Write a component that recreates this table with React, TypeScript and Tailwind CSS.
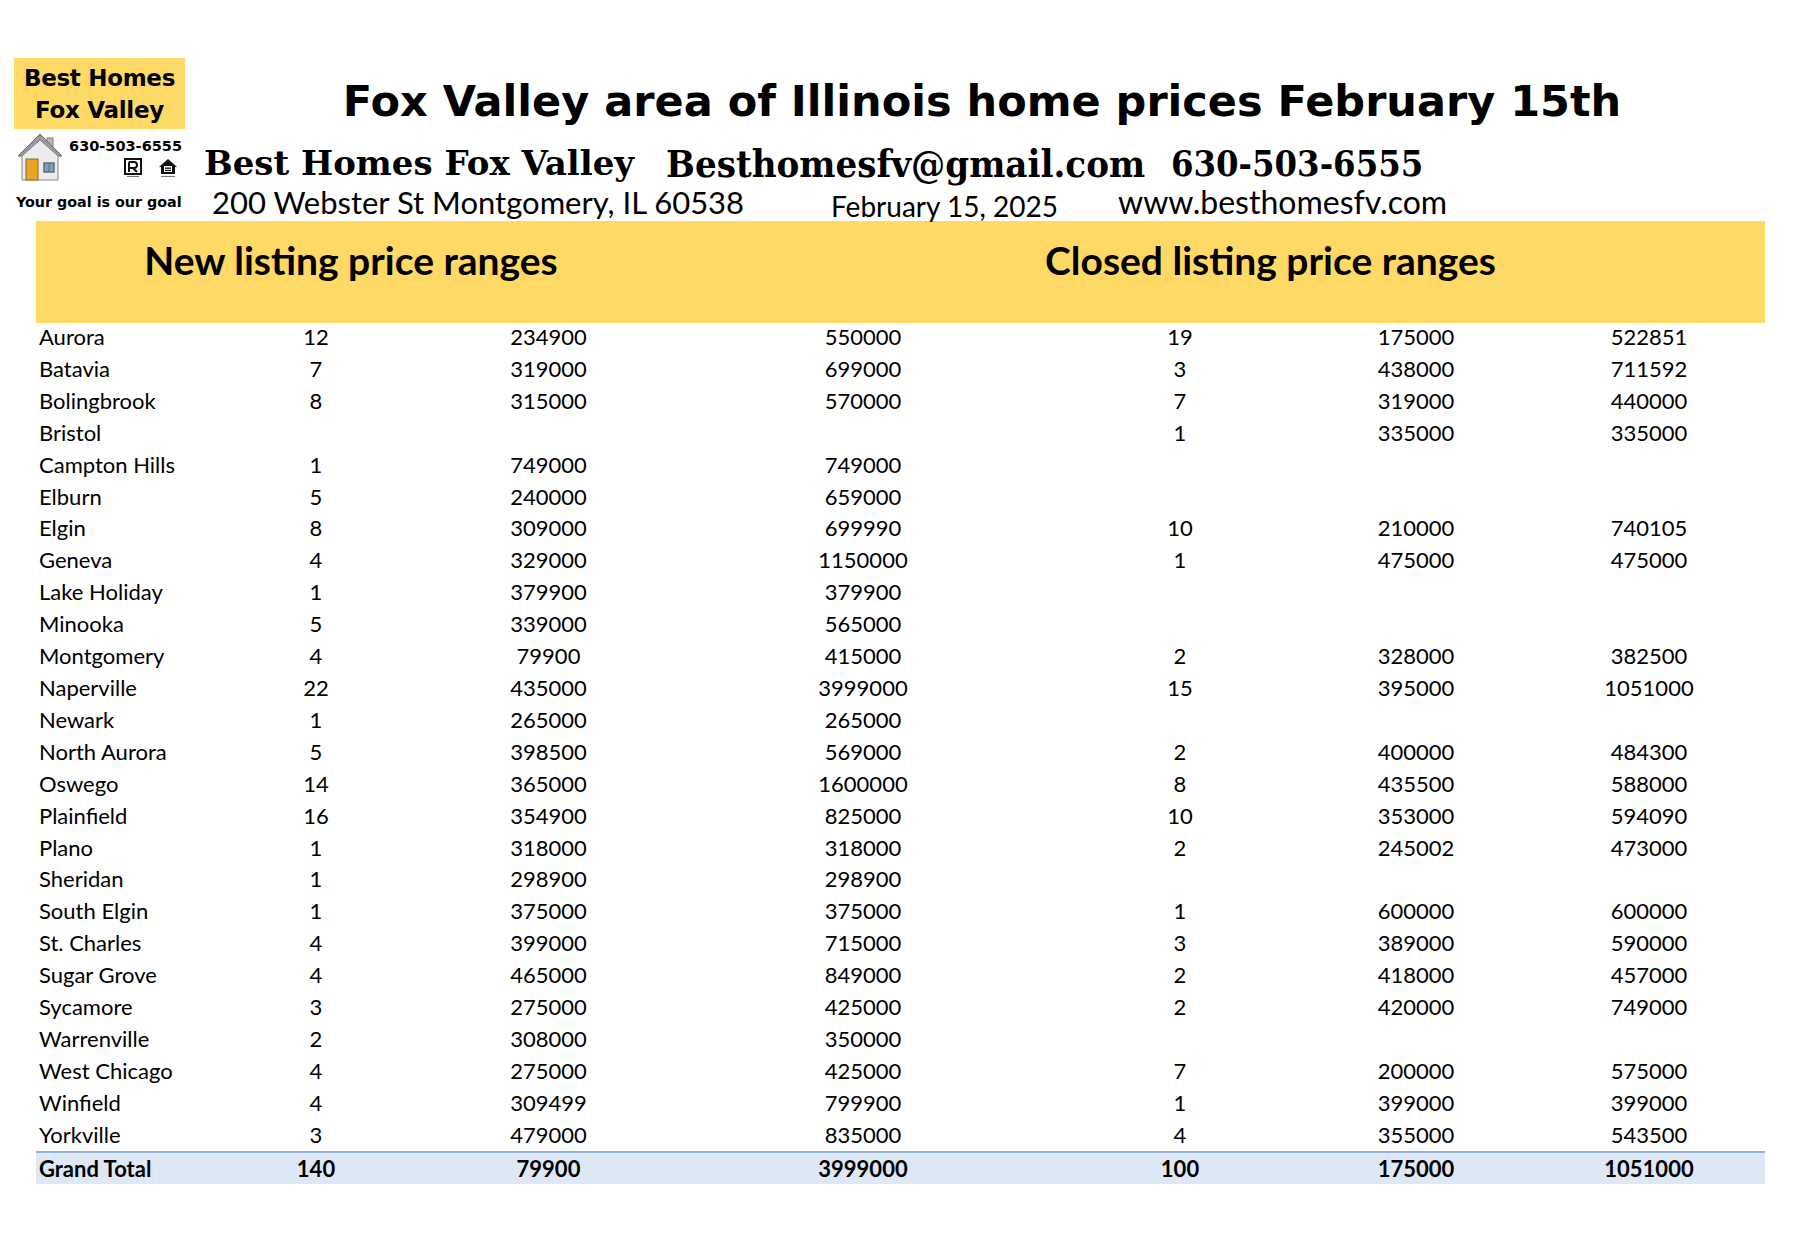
import React from "react";

type Row = [string, string, string, string, string, string, string];

const rows: Row[] = [
  ["Aurora", "12", "234900", "550000", "19", "175000", "522851"],
  ["Batavia", "7", "319000", "699000", "3", "438000", "711592"],
  ["Bolingbrook", "8", "315000", "570000", "7", "319000", "440000"],
  ["Bristol", "", "", "", "1", "335000", "335000"],
  ["Campton Hills", "1", "749000", "749000", "", "", ""],
  ["Elburn", "5", "240000", "659000", "", "", ""],
  ["Elgin", "8", "309000", "699990", "10", "210000", "740105"],
  ["Geneva", "4", "329000", "1150000", "1", "475000", "475000"],
  ["Lake Holiday", "1", "379900", "379900", "", "", ""],
  ["Minooka", "5", "339000", "565000", "", "", ""],
  ["Montgomery", "4", "79900", "415000", "2", "328000", "382500"],
  ["Naperville", "22", "435000", "3999000", "15", "395000", "1051000"],
  ["Newark", "1", "265000", "265000", "", "", ""],
  ["North Aurora", "5", "398500", "569000", "2", "400000", "484300"],
  ["Oswego", "14", "365000", "1600000", "8", "435500", "588000"],
  ["Plainfield", "16", "354900", "825000", "10", "353000", "594090"],
  ["Plano", "1", "318000", "318000", "2", "245002", "473000"],
  ["Sheridan", "1", "298900", "298900", "", "", ""],
  ["South Elgin", "1", "375000", "375000", "1", "600000", "600000"],
  ["St. Charles", "4", "399000", "715000", "3", "389000", "590000"],
  ["Sugar Grove", "4", "465000", "849000", "2", "418000", "457000"],
  ["Sycamore", "3", "275000", "425000", "2", "420000", "749000"],
  ["Warrenville", "2", "308000", "350000", "", "", ""],
  ["West Chicago", "4", "275000", "425000", "7", "200000", "575000"],
  ["Winfield", "4", "309499", "799900", "1", "399000", "399000"],
  ["Yorkville", "3", "479000", "835000", "4", "355000", "543500"],
];

const total: Row = ["Grand Total", "140", "79900", "3999000", "100", "175000", "1051000"];

const cols = "grid grid-cols-[164px_232px_233px_396px_238px_234px_232px]";

function House() {
  return (
    <svg width="48" height="50" viewBox="0 0 48 50">
      <rect x="31" y="6" width="6" height="12" fill="#b9b9b9" stroke="#7a7a7a" strokeWidth="1" />
      <polygon points="24,2 46,24 42,24 24,8 6,24 2,24" fill="#9a9a9a" stroke="#6d6d6d" strokeWidth="1" />
      <polygon points="24,8 42,24 42,48 6,48 6,24" fill="#ececec" stroke="#8a8a8a" strokeWidth="1" />
      <rect x="10" y="27" width="12" height="21" fill="#e8a524" stroke="#8a6a2a" strokeWidth="1" />
      <rect x="28" y="31" width="10" height="9" fill="#7aa0c8" stroke="#6b6b6b" strokeWidth="1.5" />
      <line x1="33" y1="31" x2="33" y2="40" stroke="#6b6b6b" strokeWidth="1" />
    </svg>
  );
}

function Realtor() {
  return (
    <svg width="18" height="20" viewBox="0 0 18 20">
      <rect x="1" y="1" width="16" height="15" fill="none" stroke="#111" strokeWidth="2" />
      <path d="M5 4 V14 M5 4 H10 Q13 4 13 7 Q13 10 10 10 H5 M9 10 L13 14" fill="none" stroke="#111" strokeWidth="2" />
      <rect x="3" y="18" width="12" height="1" fill="#777" />
    </svg>
  );
}

function EqualHousing() {
  return (
    <svg width="20" height="20" viewBox="0 0 20 20">
      <path d="M10 1 L19 9 H17 V16 H3 V9 H1 Z" fill="#111" />
      <rect x="6" y="8" width="8" height="6" fill="#fff" />
      <rect x="7" y="9.5" width="6" height="1.3" fill="#111" />
      <rect x="7" y="11.8" width="6" height="1.3" fill="#111" />
      <rect x="3" y="18" width="14" height="1" fill="#777" />
    </svg>
  );
}

function DataRow({ r, bold }: { r: Row; bold?: boolean }) {
  return (
    <div className={`${cols} items-center ${bold ? "font-bold" : ""}`}>
      <div className="pl-[3px] whitespace-nowrap">{r[0]}</div>
      {r.slice(1).map((v, i) => (
        <div key={i} className="text-center">
          {v}
        </div>
      ))}
    </div>
  );
}

export default function App() {
  return (
    <div className="w-[1800px] h-[1260px] bg-white text-black overflow-hidden font-['Lato','Liberation_Sans',sans-serif]">
      {/* Header */}
      <div className="flex h-[221px]">
        {/* Logo */}
        <div className="w-[200px] pl-[14px] pt-[58px] flex flex-col">
          <div className="w-[171px] h-[71px] bg-[#ffd966] flex flex-col items-center justify-center font-['DejaVu_Sans',sans-serif] font-bold text-[23px] leading-[32px] tracking-[-0.3px]">
            <span>Best Homes</span>
            <span>Fox Valley</span>
          </div>
          <div className="flex mt-[3px] w-[171px]">
            <div className="pl-[2px]">
              <House />
            </div>
            <div className="flex-1 flex flex-col items-end pt-[5px] pr-[3px]">
              <span className="font-['DejaVu_Sans',sans-serif] font-bold text-[14.5px] leading-[18px]">630-503-6555</span>
              <div className="flex gap-[16px] mt-[3px] pr-[4px]">
                <Realtor />
                <EqualHousing />
              </div>
            </div>
          </div>
          <div className="mt-[12px] font-['DejaVu_Sans',sans-serif] font-bold text-[14.3px] leading-[16px] whitespace-nowrap pl-[2px]">
            Your goal is our goal
          </div>
        </div>

        {/* Titles */}
        <div className="flex-1 flex flex-col">
          <div className="mt-[79px] pr-[36px] text-center font-['DejaVu_Sans',sans-serif] font-bold text-[43px] leading-[44px] whitespace-nowrap">
            Fox Valley area of Illinois home prices February 15th
          </div>
          <div className="flex items-center h-[36px] pl-[4px] mt-[22px] font-['DejaVu_Serif',serif] font-bold whitespace-nowrap">
            <span className="w-[462px] text-[34px]">Best Homes Fox Valley</span>
            <span className="w-[505px] text-[38px] font-stretch-condensed">Besthomesfv@gmail.com</span>
            <span className="text-[36px] font-stretch-condensed">630-503-6555</span>
          </div>
          <div className="flex items-center h-[32px] pl-[12px] mt-[5px] whitespace-nowrap">
            <span className="w-[619px] text-[31px]">200 Webster St Montgomery, IL 60538</span>
            <span className="w-[287px] text-[28px] pt-[8px]">February 15, 2025</span>
            <span className="text-[32px]">www.besthomesfv.com</span>
          </div>
        </div>
      </div>

      {/* Table */}
      <div className="ml-[36px] w-[1729px]">
        <div className="h-[102px] bg-[#ffd966] flex font-bold text-[39px] leading-[46px]">
          <div className="w-[630px] text-center pt-[16px]">New listing price ranges</div>
          <div className="flex-1 text-center pt-[16px] pl-[110px]">Closed listing price ranges</div>
        </div>
        <div className="text-[22px] leading-[31.9px] -mt-[2px]">
          {rows.map((r) => (
            <DataRow key={r[0]} r={r} />
          ))}
          <div className="border-t-2 border-[#93b3d7] bg-[#dde8f4] h-[33px] leading-[31px]">
            <DataRow r={total} bold />
          </div>
        </div>
      </div>
    </div>
  );
}
